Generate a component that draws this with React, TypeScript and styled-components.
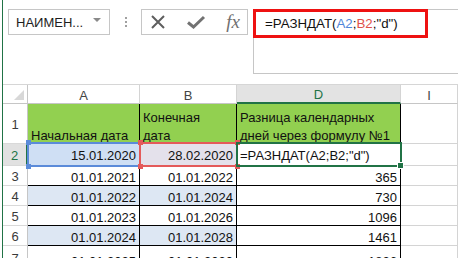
import React from "react";
import styled, { createGlobalStyle } from "styled-components";

const GlobalStyle = createGlobalStyle`
  html, body {
    margin: 0;
    padding: 0;
    background: #fff;
  }
  body {
    font-family: "Liberation Sans", Arial, sans-serif;
  }
`;

const Window = styled.div`
  width: 458px;
  height: 258px;
  overflow: hidden;
  box-sizing: border-box;
  padding-left: 2px;
  background: #fff;
`;

const Inner = styled.div`
  height: 100%;
  border-left: 1px solid #217346;
`;

const FormulaBar = styled.div`
  display: flex;
  align-items: flex-start;
  height: 84px;
  box-sizing: border-box;
  padding: 9px 0 0 5px;
`;

const NameBox = styled.div`
  display: flex;
  align-items: center;
  justify-content: space-between;
  width: 102px;
  height: 26px;
  box-sizing: border-box;
  border: 1px solid #c6c6c6;
  padding: 0 8px 0 7px;
  font-size: 13px;
  color: #1e1e1e;
`;

const DropArrow = styled.span`
  width: 0;
  height: 0;
  border-left: 4px solid transparent;
  border-right: 4px solid transparent;
  border-top: 4px solid #8a8a8a;
  margin-bottom: 4px;
`;

const Grip = styled.div`
  display: flex;
  flex-direction: column;
  align-items: center;
  gap: 2px;
  width: 31px;
  padding-top: 8px;
`;

const GripDot = styled.span`
  width: 2px;
  height: 2px;
  background: #a0a0a0;
`;

const ButtonsBox = styled.div`
  display: flex;
  align-items: center;
  justify-content: space-between;
  width: 107px;
  height: 26px;
  box-sizing: border-box;
  border: 1px solid #c6c6c6;
  padding: 0 7px 0 8px;
`;

const Fx = styled.span`
  font-family: "Liberation Serif", "Times New Roman", serif;
  font-style: italic;
  font-size: 19px;
  color: #707070;
  line-height: 1;
  margin-top: -2px;
`;

const FormulaBox = styled.div`
  position: relative;
  flex: 1;
  height: 65px;
  margin-left: 5px;
  box-sizing: border-box;
  border: 1px solid #c6c6c6;
  border-right: none;
  padding: 6px 0 0 11px;
  font-size: 13.3px;
  line-height: 15px;
  color: #111;
  white-space: nowrap;
`;

const RedMark = styled.div`
  position: absolute;
  left: -1px;
  top: -1px;
  width: 175px;
  height: 29px;
  box-sizing: border-box;
  border: 3px solid #ee1111;
  pointer-events: none;
`;

const Ref = styled.span<{ $color: string }>`
  color: ${(p) => p.$color};
`;

const Grid = styled.div`
  display: grid;
  grid-template-columns: 25px 112px 97px 164px 1fr;
  grid-template-rows: 19px 40px 22px 20px 20px 20px 20px 24px;
  border-top: 1px solid #d6d6d6;
`;

const Corner = styled.div`
  position: relative;
  border-right: 1px solid #c6c6c6;
  border-bottom: 1px solid #c6c6c6;
  &::after {
    content: "";
    position: absolute;
    right: 3px;
    bottom: 3px;
    width: 0;
    height: 0;
    border-left: 10px solid transparent;
    border-bottom: 10px solid #d8d8d8;
  }
`;

const ColHead = styled.div<{ $active?: boolean }>`
  display: flex;
  align-items: center;
  justify-content: center;
  padding-top: 2px;
  font-size: 13px;
  color: ${(p) => (p.$active ? "#217346" : "#444")};
  background: ${(p) => (p.$active ? "#e3e3e3" : "#fff")};
  border-right: 1px solid #d4d4d4;
  border-bottom: ${(p) => (p.$active ? "2px solid #217346" : "1px solid #c6c6c6")};
`;

const RowHead = styled.div<{ $active?: boolean }>`
  display: flex;
  align-items: center;
  justify-content: center;
  padding-top: 2px;
  font-size: 13px;
  color: ${(p) => (p.$active ? "#217346" : "#3a3a3a")};
  background: ${(p) => (p.$active ? "#e1e1e1" : "#fff")};
  border-right: ${(p) => (p.$active ? "2px solid #217346" : "1px solid #c6c6c6")};
  border-bottom: 1px solid #d9d9d9;
`;

type CellProps = {
  $fill?: string;
  $right?: boolean;
  $edge?: string;
  $floor?: string;
  $wrap?: boolean;
};

const Cell = styled.div<CellProps>`
  position: relative;
  display: flex;
  align-items: flex-end;
  justify-content: ${(p) => (p.$right ? "flex-end" : "flex-start")};
  padding: 0 3px 0 3px;
  background: ${(p) => p.$fill ?? "#fff"};
  border-right: 1px solid ${(p) => p.$edge ?? "#d4d4d4"};
  border-bottom: 1px solid ${(p) => p.$floor ?? "#d4d4d4"};
  font-size: 13px;
  line-height: ${(p) => (p.$wrap ? "18px" : "15px")};
  color: #111;
  white-space: nowrap;
`;

const Text = styled.span<{ $lift?: number }>`
  margin-bottom: ${(p) => p.$lift ?? 0}px;
`;

const RefFrame = styled.div<{ $color: string }>`
  position: absolute;
  top: -2px;
  left: -1px;
  right: -2px;
  bottom: -2px;
  border: 2px solid ${(p) => p.$color};
  z-index: 2;
  pointer-events: none;
`;

const Handle = styled.span<{ $color: string; $x: "l" | "r"; $y: "t" | "b" }>`
  position: absolute;
  width: 5px;
  height: 5px;
  background: ${(p) => p.$color};
  ${(p) => (p.$x === "l" ? "left: -3px;" : "right: -4px;")}
  ${(p) => (p.$y === "t" ? "top: -4px;" : "bottom: -4px;")}
`;

const FillHandle = styled.span`
  position: absolute;
  right: -4px;
  bottom: -4px;
  width: 5px;
  height: 5px;
  background: #217346;
  border: 1px solid #fff;
`;

const GREEN = "#92d050";
const BAND = "#dde7f3";
const INK = "#000";

const rows = [
  ["01.01.2021", "01.01.2022", "365"],
  ["01.01.2022", "01.01.2024", "730"],
  ["01.01.2023", "01.01.2026", "1096"],
  ["01.01.2024", "01.01.2028", "1461"],
  ["01.01.2025", "01.01.2030", "1826"],
];

const Corners = ({ color }: { color: string }) => (
  <>
    <Handle $color={color} $x="l" $y="t" />
    <Handle $color={color} $x="r" $y="t" />
    <Handle $color={color} $x="l" $y="b" />
    <Handle $color={color} $x="r" $y="b" />
  </>
);

const App = () => {
  return (
    <>
      <GlobalStyle />
      <Window>
        <Inner>
          <FormulaBar>
            <NameBox>
              <span>НАИМЕН...</span>
              <DropArrow />
            </NameBox>
            <Grip>
              <GripDot />
              <GripDot />
              <GripDot />
            </Grip>
            <ButtonsBox>
              <svg width="16" height="16" viewBox="0 0 16 16">
                <path d="M2 2 L14 14 M14 2 L2 14" stroke="#5e5e5e" strokeWidth="2" fill="none" />
              </svg>
              <svg width="20" height="16" viewBox="0 0 20 16">
                <path d="M2 8.5 L7.5 13 L18 3" stroke="#727272" strokeWidth="3" fill="none" />
              </svg>
              <Fx>fx</Fx>
            </ButtonsBox>
            <FormulaBox>
              =РАЗНДАТ(<Ref $color="#4f86d9">A2</Ref>;<Ref $color="#e0504a">B2</Ref>;"d")
              <RedMark />
            </FormulaBox>
          </FormulaBar>

          <Grid>
            <Corner />
            <ColHead>A</ColHead>
            <ColHead>B</ColHead>
            <ColHead $active>D</ColHead>
            <ColHead>I</ColHead>

            <RowHead>1</RowHead>
            <Cell $fill={GREEN} $edge={INK} $floor={INK} $wrap>
              <Text $lift={-2}>Начальная дата</Text>
            </Cell>
            <Cell $fill={GREEN} $edge={INK} $floor={INK} $wrap>
              <Text $lift={-2}>
                Конечная
                <br />
                дата
              </Text>
            </Cell>
            <Cell $fill={GREEN} $edge={INK} $floor={INK} $wrap>
              <Text $lift={-2}>
                Разница календарных
                <br />
                дней через формулу №1
              </Text>
            </Cell>
            <Cell />

            <RowHead $active>2</RowHead>
            <Cell $fill="#cfdff4" $edge={INK} $floor={INK} $right>
              <Text $lift={2}>15.01.2020</Text>
              <RefFrame $color="#5b8bd9">
                <Corners color="#5b8bd9" />
              </RefFrame>
            </Cell>
            <Cell $fill="#e4e1eb" $edge={INK} $floor={INK} $right>
              <Text $lift={2}>28.02.2020</Text>
              <RefFrame $color="#e45a5a">
                <Corners color="#e45a5a" />
              </RefFrame>
            </Cell>
            <Cell $edge={INK} $floor={INK}>
              <Text $lift={2}>=РАЗНДАТ(A2;B2;"d")</Text>
              <RefFrame $color="#217346">
                <FillHandle />
              </RefFrame>
            </Cell>
            <Cell />

            {rows.map((r, i) => {
              const fill = i % 2 === 1 ? BAND : "#fff";
              return (
                <React.Fragment key={i}>
                  <RowHead>{i + 3}</RowHead>
                  <Cell $fill={fill} $edge={INK} $floor={INK} $right>
                    <Text>{r[0]}</Text>
                  </Cell>
                  <Cell $fill={fill} $edge={INK} $floor={INK} $right>
                    <Text>{r[1]}</Text>
                  </Cell>
                  <Cell $edge={INK} $floor={INK} $right>
                    <Text>{r[2]}</Text>
                  </Cell>
                  <Cell />
                </React.Fragment>
              );
            })}
          </Grid>
        </Inner>
      </Window>
    </>
  );
};

export default App;
